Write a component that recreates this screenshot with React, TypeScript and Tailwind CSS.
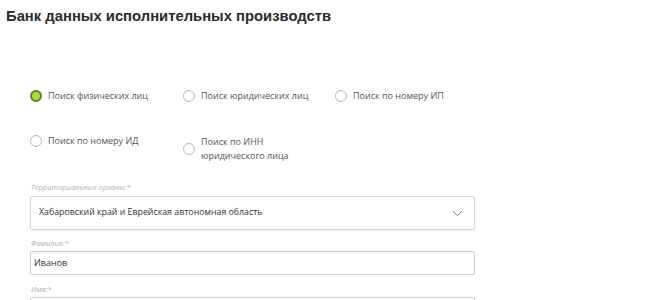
import { ChevronDown } from "lucide-react"

const font = { fontFamily: '"Open Sans", "Liberation Sans", sans-serif' }

function Radio({ checked, label }: { checked?: boolean; label: React.ReactNode }) {
  return (
    <label className="flex items-start gap-[6px] text-[9px] leading-[14px] text-[#555]">
      {checked ? (
        <span className="mt-[1px] block h-[12px] w-[12px] shrink-0 rounded-full border-[2px] border-[#3f8f2a] bg-[#b9d937]" />
      ) : (
        <span className="mt-[1px] block h-[12px] w-[12px] shrink-0 rounded-full border border-[#b8b8b8] bg-white" />
      )}
      <span>{label}</span>
    </label>
  )
}

export default function App() {
  return (
    <div className="h-[300px] w-[660px] overflow-hidden bg-white" style={font}>
      <h1
        className="pl-[6px] pt-[6px] text-[14.8px] font-bold leading-[20px] text-[#2b2b2b]"
        style={{ fontFamily: '"Liberation Sans", Arial, sans-serif' }}
      >
        Банк данных исполнительных производств
      </h1>

      <div className="ml-[30px] mt-[63px] grid w-[460px] grid-cols-[153px_152px_155px] gap-y-[31px]">
        <Radio checked label="Поиск физических лиц" />
        <Radio label="Поиск юридических лиц" />
        <Radio label="Поиск по номеру ИП" />
        <Radio label="Поиск по номеру ИД" />
        <div className="pt-[1px]">
          <div className="flex items-center gap-[6px] text-[9px] leading-[14px] text-[#555]">
            <span className="block h-[12px] w-[12px] shrink-0 rounded-full border border-[#b8b8b8] bg-white" />
            <span>
              Поиск по ИНН
              <br />
              юридического лица
            </span>
          </div>
        </div>
      </div>

      <div className="ml-[30px] mt-[18px] w-[445px]">
        <div className="pl-[1px] text-[7.5px] italic leading-[12px] text-[#b0b0b0]">
          Территориальные органы:*
        </div>
        <div className="mt-[3px] flex h-[34px] items-center justify-between rounded-[2px] border border-[#d6d6d6] pl-[8px] pr-[8px] shadow-[0_1px_2px_rgba(0,0,0,0.08)]">
          <span className="text-[8.8px] text-[#333]">Хабаровский край и Еврейская автономная область</span>
          <ChevronDown className="h-[17px] w-[17px] text-[#777]" strokeWidth={1.4} />
        </div>

        <div className="mt-[7px] pl-[1px] text-[7.5px] italic leading-[12px] text-[#b0b0b0]">Фамилия:*</div>
        <div className="mt-[2px] flex h-[24px] items-center rounded-[2px] border border-[#d0d0d0] pl-[3px] shadow-[inset_0_1px_2px_rgba(0,0,0,0.06)]">
          <span className="text-[9px] text-[#333]">Иванов</span>
        </div>

        <div className="mt-[8px] pl-[1px] text-[7.5px] italic leading-[12px] text-[#b0b0b0]">Имя:*</div>
        <div className="mt-[2px] h-[24px] rounded-[2px] border border-[#d0d0d0]" />
      </div>
    </div>
  )
}
